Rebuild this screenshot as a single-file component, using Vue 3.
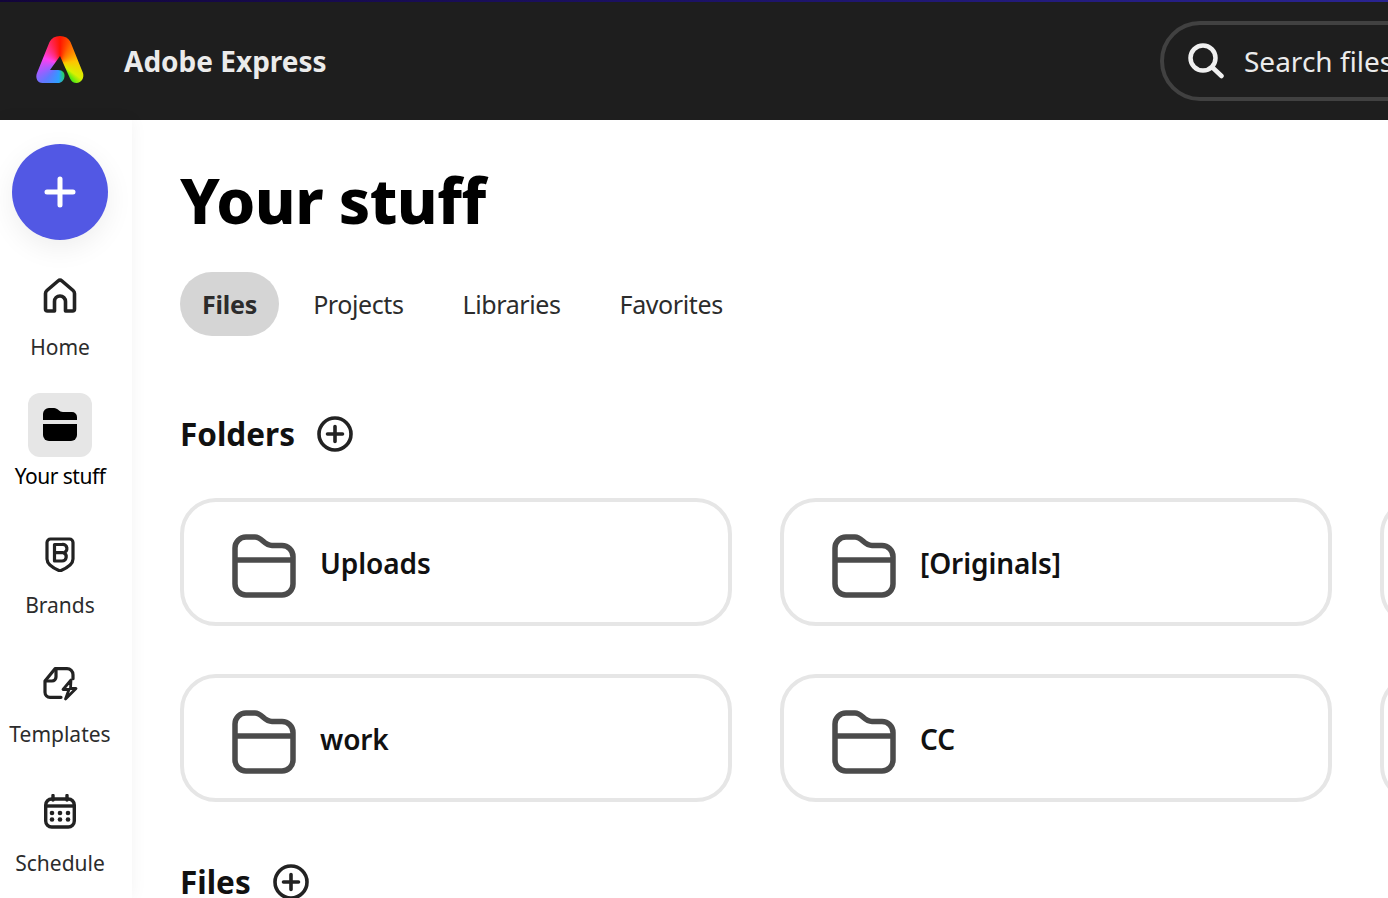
<template>
  <div class="app">
    <header class="topbar">
      <div class="brand">
        <div class="logo-wrap"><div class="logo"></div></div>
        <span class="brand-name">Adobe Express</span>
      </div>
      <div class="search">
        <svg class="search-icon" width="36" height="36" viewBox="0 0 36 36" fill="none" stroke="#f0f0f0" stroke-width="4.5" stroke-linecap="round">
          <circle cx="15" cy="15" r="12.5" />
          <path d="M24.5 24.5L33.5 33" />
        </svg>
        <span class="search-text">Search files</span>
      </div>
    </header>

    <div class="body-row">
      <aside class="sidebar">
        <button class="create-btn">
          <svg width="32" height="32" viewBox="0 0 32 32" fill="none" stroke="#fff" stroke-width="5" stroke-linecap="round">
            <path d="M16 3V29M3 16H29" />
          </svg>
        </button>

        <div v-for="item in navItems" :key="item.label" class="nav-item" :class="{ active: item.active }">
          <div class="nav-icon">
            <svg v-if="item.label === 'Home'" width="36" height="36" viewBox="0 0 36 36" fill="none" stroke="#222" stroke-width="3.6" stroke-linejoin="round">
              <path d="M12.5 33H5.5a2 2 0 0 1-2-2V15.5a4 4 0 0 1 1.4-3L16 3a3 3 0 0 1 4 0l11.100 9.500a4 4 0 0 1 1.400 3V31a2 2 0 0 1-2 2H23.500V23.500a5.500 5.500 0 0 0-11 0Z" />
            </svg>
            <svg v-else-if="item.label === 'Your stuff'" width="36" height="36" viewBox="0 0 36 36" fill="#000">
              <path d="M1 13V7a6 6 0 0 1 6-6h5c4 0 5 4 9 4h9a5 5 0 0 1 5 5v3Z" />
              <path d="M1 17h34v11a6 6 0 0 1-6 6H7a6 6 0 0 1-6-6Z" />
            </svg>
            <svg v-else-if="item.label === 'Brands'" width="36" height="36" viewBox="0 0 36 36" fill="none" stroke="#222" stroke-width="3.2" stroke-linejoin="round">
              <path d="M8.500 3H27.500a3.500 3.500 0 0 1 3.500 3.500V23c0 5-7 9.500-13 12C12 32.500 5 28 5 23V6.500A3.500 3.500 0 0 1 8.500 3Z" />
              <path d="M12.500 8.500V25H20a4.300 4.300 0 0 0 1.500-8.300 3.900 3.900 0 0 0-1.500-8.200ZM12.500 16.700H21" />
            </svg>
            <svg v-else-if="item.label === 'Templates'" width="36" height="36" viewBox="0 0 36 36" fill="none" stroke="#222" stroke-width="3.2" stroke-linejoin="round" stroke-linecap="round">
              <path d="M19 32.300H8a5 5 0 0 1-5-5V16L13 3.700h12a6 6 0 0 1 6 6v4" />
              <path d="M3.500 16H10a4 4 0 0 0 4-4V4" />
              <path d="M29 15L21 24.500H27L23.500 34L34 23.500H28.500Z" stroke-width="2.800" />
            </svg>
            <svg v-else width="36" height="36" viewBox="0 0 36 36" fill="none" stroke="#222" stroke-width="3.4">
              <rect x="3.700" y="5" width="28.600" height="28" rx="6" />
              <path d="M4 12H32" />
              <path d="M11 1.500V6M25 1.500V6" stroke-linecap="round" />
              <g fill="#222" stroke="none">
                <circle cx="10" cy="19" r="2.300" /><circle cx="18" cy="19" r="2.300" /><circle cx="26" cy="19" r="2.300" />
                <circle cx="10" cy="25.500" r="2.300" /><circle cx="18" cy="25.500" r="2.300" /><circle cx="26" cy="25.500" r="2.300" />
              </g>
            </svg>
          </div>
          <span class="nav-label">{{ item.label }}</span>
        </div>
      </aside>

      <main class="content">
        <h1 class="page-title">Your stuff</h1>

        <div class="tabs">
          <span v-for="tab in tabs" :key="tab" class="tab" :class="{ selected: tab === 'Files' }">{{ tab }}</span>
        </div>

        <div class="section-head">
          <h2>Folders</h2>
          <svg width="36" height="36" viewBox="0 0 36 36" fill="none" stroke="#222" stroke-width="3.600">
            <circle cx="18" cy="18" r="16" />
            <path d="M18 10.500V25.500M10.500 18H25.500" stroke-linecap="round" />
          </svg>
        </div>

        <div class="folder-grid">
          <div v-for="(folder, i) in folders" :key="i" class="folder-card">
            <svg v-if="folder" class="folder-icon" width="64" height="64" viewBox="0 0 64 64" fill="none" stroke="#4b4b4b" stroke-width="5.500" stroke-linejoin="round">
              <path d="M14 3H23C30 3 32 11.500 40 11.500H50A11 11 0 0 1 61 22.500V50A11 11 0 0 1 50 61H14A11 11 0 0 1 3 50V14A11 11 0 0 1 14 3Z" />
              <path d="M3 26H61" />
            </svg>
            <span class="folder-name">{{ folder }}</span>
          </div>
        </div>

        <div class="section-head files-head">
          <h2>Files</h2>
          <svg width="36" height="36" viewBox="0 0 36 36" fill="none" stroke="#222" stroke-width="3.600">
            <circle cx="18" cy="18" r="16" />
            <path d="M18 10.500V25.500M10.500 18H25.500" stroke-linecap="round" />
          </svg>
        </div>
      </main>
    </div>
  </div>
</template>

<script setup>
const navItems = [
  { label: 'Home' },
  { label: 'Your stuff', active: true },
  { label: 'Brands' },
  { label: 'Templates' },
  { label: 'Schedule' },
]

const tabs = ['Files', 'Projects', 'Libraries', 'Favorites']

// third column is cut off by the window edge
const folders = ['Uploads', '[Originals]', '', 'work', 'CC', '']
</script>

<style>
html, body {
  margin: 0;
  background: #fff;
}
</style>

<style scoped>
.app {
  width: 1388px;
  height: 898px;
  overflow: hidden;
  font-family: "Noto Sans", "Open Sans", sans-serif;
  color: #222;
  display: flex;
  flex-direction: column;
}

.topbar {
  height: 120px;
  flex-shrink: 0;
  box-sizing: border-box;
  background: #1e1e1e;
  border-top: 2px solid;
  border-image: linear-gradient(90deg, #12043a, #1c1266 50%, #2a2492) 1;
  display: flex;
  align-items: center;
  justify-content: space-between;
}

.brand {
  display: flex;
  align-items: center;
  gap: 40px;
  padding-left: 36px;
}

.logo-wrap {
  width: 48px;
  height: 48px;
  margin-top: -2px;
}

.logo {
  width: 48px;
  height: 48px;
  background: conic-gradient(from 0deg at 50% 58%, #ff1500 0deg, #ff6a00 30deg, #ffc400 80deg, #d8f000 125deg, #22e51a 150deg, #2ca0ff 185deg, #5f78ff 222deg, #a45cff 250deg, #ff40f0 290deg, #ff2a70 330deg, #ff1500 360deg);
  clip-path: path("M13.500 6C15.500 2 19 0 24 0C29 0 32.500 2 34.500 6L47 37C48.500 41.500 45.500 47 40.500 47C37.500 47 35.500 45.500 34 42.500L24 20L14 34H22C27 34 29 37 28.500 40.500C28 44.500 25.500 47 22 47H6.500C1.500 47 -1 42 1 37Z");
}

.brand-name {
  font-size: 28px;
  font-weight: 700;
  color: #ebebeb;
}

.search {
  width: 300px;
  height: 80px;
  box-sizing: border-box;
  margin-right: -72px;
  border: 4px solid #414141;
  border-radius: 40px;
  display: flex;
  align-items: center;
  padding-left: 24px;
  gap: 20px;
  overflow: hidden;
}

.search-icon {
  flex-shrink: 0;
}

.search-text {
  font-size: 28px;
  color: #ebebeb;
  white-space: nowrap;
  margin-top: -1px;
}

.body-row {
  flex: 1;
  display: flex;
  min-height: 0;
}

.sidebar {
  width: 132px;
  flex-shrink: 0;
  box-sizing: border-box;
  padding: 24px 12px 0 0;
  display: flex;
  flex-direction: column;
  align-items: center;
  box-shadow: 0 0 16px rgba(0, 0, 0, 0.05);
}

.create-btn {
  width: 96px;
  height: 96px;
  border: none;
  border-radius: 50%;
  background: #5258e4;
  display: flex;
  align-items: center;
  justify-content: center;
  margin-bottom: 24px;
  flex-shrink: 0;
  box-shadow: 0 8px 28px rgba(0, 0, 0, 0.07);
}

.nav-item {
  display: flex;
  flex-direction: column;
  align-items: center;
  margin-bottom: 27px;
  flex-shrink: 0;
}

.nav-icon {
  width: 64px;
  height: 64px;
  border-radius: 12px;
  display: flex;
  align-items: center;
  justify-content: center;
}

.nav-item.active .nav-icon {
  background: #e6e6e6;
}

.nav-label {
  margin-top: 1px;
  font-size: 21px;
  line-height: 37px;
  color: #2c2c2c;
  white-space: nowrap;
}

.nav-item.active .nav-label {
  color: #000;
  letter-spacing: -0.5px;
}

.content {
  flex: 1;
  min-width: 0;
  padding: 40px 0 0 48px;
}

.page-title {
  margin: 0 0 32px;
  font-size: 62px;
  line-height: 80px;
  font-weight: 800;
  letter-spacing: -0.5px;
  color: #000;
}

.tabs {
  display: flex;
  gap: 15px;
  margin-bottom: 80px;
}

.tab {
  height: 64px;
  line-height: 64px;
  padding: 0 22px;
  border-radius: 32px;
  font-size: 25px;
  letter-spacing: -0.4px;
  color: #2c2c2c;
}

.tab.selected {
  background: #d5d5d5;
  font-weight: 700;
  letter-spacing: -0.2px;
  margin-right: -3px;
}

.section-head {
  display: flex;
  align-items: center;
  gap: 22px;
  height: 36px;
  margin-bottom: 46px;
}

.section-head h2 {
  margin: 0;
  font-size: 31.5px;
  line-height: 36px;
  font-weight: 700;
  color: #111;
}

.folder-grid {
  display: grid;
  grid-template-columns: repeat(3, 552px);
  grid-auto-rows: 128px;
  gap: 48px;
}

.folder-card {
  box-sizing: border-box;
  border: 4px solid #e6e6e6;
  border-radius: 36px;
  padding-left: 48px;
  display: flex;
  align-items: center;
  gap: 24px;
}

.folder-icon {
  margin-top: 8px;
}

.folder-name {
  font-size: 28px;
  font-weight: 600;
  letter-spacing: -0.1px;
  color: #111;
  margin-top: 2px;
}

.files-head {
  margin-top: 62px;
  margin-bottom: 0;
}
</style>
